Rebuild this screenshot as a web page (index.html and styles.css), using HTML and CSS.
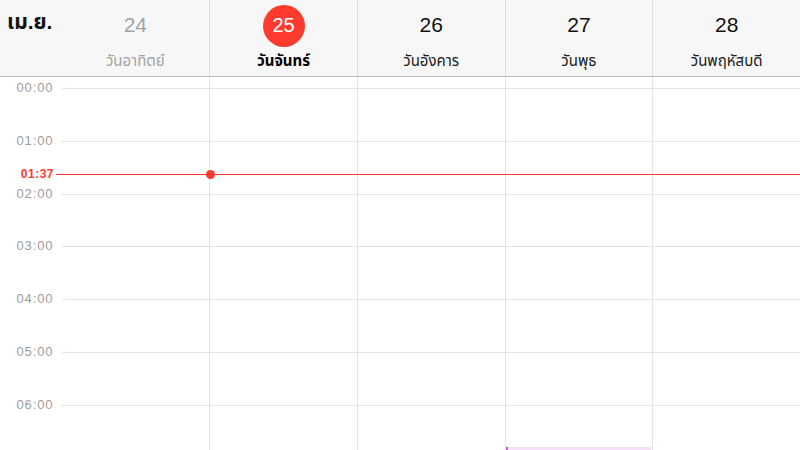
FILE: index.html
```html
<!DOCTYPE html>
<html lang="th">
<head>
<meta charset="utf-8">
<link rel="stylesheet" href="styles.css">
</head>
<body>
<div class="cal">
  <div class="head">
    <div class="month">เม.ย.</div>
    <div class="day past">
      <div class="num">24</div>
      <div class="name">วันอาทิตย์</div>
    </div>
    <div class="day today sep">
      <div class="num"><span class="circle">25</span></div>
      <div class="name">วันจันทร์</div>
    </div>
    <div class="day sep">
      <div class="num">26</div>
      <div class="name">วันอังคาร</div>
    </div>
    <div class="day sep">
      <div class="num">27</div>
      <div class="name">วันพุธ</div>
    </div>
    <div class="day sep">
      <div class="num">28</div>
      <div class="name">วันพฤหัสบดี</div>
    </div>
  </div>
  <div class="grid">
    <div class="vcol c3"></div>
    <div class="vcol c4"></div>
    <div class="vcol c5"></div>
    <div class="vcol c6"></div>

    <div class="label r2">00:00</div><div class="hline r2"></div>
    <div class="label r3">01:00</div><div class="hline r3"></div>
    <div class="label r4">02:00</div><div class="hline r4"></div>
    <div class="label r5">03:00</div><div class="hline r5"></div>
    <div class="label r6">04:00</div><div class="hline r6"></div>
    <div class="label r7">05:00</div><div class="hline r7"></div>
    <div class="label r8">06:00</div><div class="hline r8"></div>

    <div class="event"></div>

    <div class="now">
      <span class="now-label">01:37</span>
      <span class="now-line"><span class="now-dot"></span></span>
    </div>
  </div>
</div>
</body>
</html>
```
FILE: styles.css
```css
html, body {
  margin: 0;
  padding: 0;
  background: #ffffff;
}
body {
  font-family: "Helvetica Neue", "Liberation Sans", "Noto Sans Thai", "Loma", "Garuda", "Tlwg Typo", sans-serif;
  color: #111;
  width: 800px;
  height: 450px;
  overflow: hidden;
}
.cal {
  width: 800px;
  height: 450px;
  overflow: hidden;
}
.head {
  display: grid;
  grid-template-columns: 61.5px repeat(5, 1fr);
  height: 76px;
  background: #f7f7f7;
  border-bottom: 1px solid #bcbcbc;
}
.month {
  font-size: 21px;
  font-weight: bold;
  padding: 7px 0 0 7px;
  color: #111;
  white-space: nowrap;
}
.day {
  display: flex;
  flex-direction: column;
  align-items: center;
}
.day.sep {
  border-left: 1px solid #dedede;
}
.num {
  height: 50px;
  display: flex;
  align-items: center;
  justify-content: center;
  font-size: 21px;
  color: #111;
}
.past .num,
.past .name {
  color: #a3a3a3;
}
.circle {
  width: 42px;
  height: 42px;
  border-radius: 50%;
  background: #ff3b30;
  color: #fff;
  display: flex;
  align-items: center;
  justify-content: center;
  font-size: 20px;
  font-weight: 500;
  margin-top: 1px;
}
.name {
  font-size: 15px;
  color: #1a1a1a;
  line-height: 22px;
}
.today .name {
  font-weight: bold;
  color: #000;
}

.grid {
  position: relative;
  display: grid;
  grid-template-columns: 61.5px repeat(5, 1fr);
  grid-template-rows: 11px repeat(7, 52.83px);
}
.vcol {
  grid-row: 1 / -1;
  border-left: 1px solid #e3e3e3;
}
.c3 { grid-column: 3; }
.c4 { grid-column: 4; }
.c5 { grid-column: 5; }
.c6 { grid-column: 6; }

.hline {
  grid-column: 2 / -1;
  border-top: 1px solid #e4e4e4;
}
.label {
  grid-column: 1;
  text-align: right;
  padding-right: 8px;
  margin-top: -8px;
  font-size: 13px;
  letter-spacing: 0.9px;
  color: #9d9d9d;
  line-height: 16px;
}
.r2 { grid-row: 2; }
.r3 { grid-row: 3; }
.r4 { grid-row: 4; }
.r5 { grid-row: 5; }
.r6 { grid-row: 6; }
.r7 { grid-row: 7; }
.r8 { grid-row: 8; }

.event {
  grid-column: 5;
  grid-row: 8;
  align-self: start;
  margin: 42px 1px 0 1px;
  height: 10px;
  background: #f6e1f8;
  border-left: 2px solid #c75ddc;
}

.now {
  position: absolute;
  left: 0;
  right: 0;
  top: 89px;
  height: 16px;
  display: flex;
  align-items: center;
}
.now-label {
  width: 54px;
  text-align: right;
  font-size: 12px;
  font-weight: bold;
  color: #ff3b30;
  letter-spacing: 0.5px;
  padding-right: 2px;
}
.now-line {
  flex: 1;
  height: 1px;
  background: #ff3b30;
  position: relative;
}
.now-dot {
  position: absolute;
  left: 150px;
  top: -4px;
  width: 9px;
  height: 9px;
  border-radius: 50%;
  background: #ff3b30;
}
```
